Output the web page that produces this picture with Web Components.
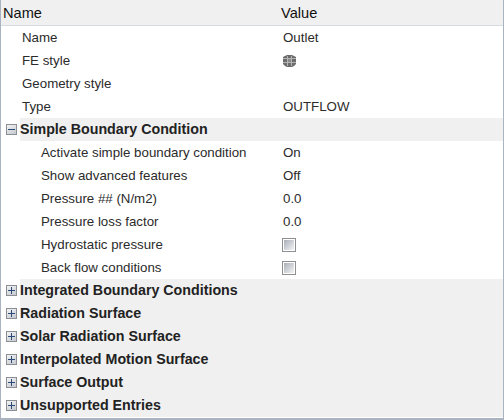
<!DOCTYPE html>
<html>
<head>
<meta charset="utf-8">
<style>
  html, body { margin: 0; padding: 0; background: #fff; }
  body { font-family: "Liberation Sans", Arial, sans-serif; font-size: 13.3px; color: #222; }
</style>
</head>
<body>
<prop-tree>
  <prop-row label="Name" value="Outlet"></prop-row>
  <prop-row label="FE style"><style-icon></style-icon></prop-row>
  <prop-row label="Geometry style"></prop-row>
  <prop-row label="Type" value="OUTFLOW"></prop-row>
  <prop-group label="Simple Boundary Condition" open>
    <prop-row depth="1" label="Activate simple boundary condition" value="On"></prop-row>
    <prop-row depth="1" label="Show advanced features" value="Off"></prop-row>
    <prop-row depth="1" label="Pressure ## (N/m2)" value="0.0"></prop-row>
    <prop-row depth="1" label="Pressure loss factor" value="0.0"></prop-row>
    <prop-row depth="1" label="Hydrostatic pressure"><check-box></check-box></prop-row>
    <prop-row depth="1" label="Back flow conditions"><check-box></check-box></prop-row>
  </prop-group>
  <prop-group label="Integrated Boundary Conditions"></prop-group>
  <prop-group label="Radiation Surface"></prop-group>
  <prop-group label="Solar Radiation Surface"></prop-group>
  <prop-group label="Interpolated Motion Surface"></prop-group>
  <prop-group label="Surface Output"></prop-group>
  <prop-group label="Unsupported Entries"></prop-group>
</prop-tree>

<script>
class PropTree extends HTMLElement {
  constructor () {
    super()
    this.attachShadow({ mode: 'open' }).innerHTML = /*html*/`
      <style>
        :host {
          display: flex;
          flex-direction: column;
          box-sizing: border-box;
          width: 504px;
          height: 420px;
          border-left: 1px solid #a9b4c0;
          border-right: 1px solid #a9b4c0;
          border-bottom: 2px solid #a9b4c0;
          overflow: hidden;
        }
        #head {
          display: flex;
          align-items: center;
          height: 25px;
          background: #f0f0f0;
          border-bottom: 1px solid #d5dadf;
          color: #111;
          font-size: 14.6px;
        }
        #head span:first-child { width: 280px; padding-left: 2px; box-sizing: border-box; }
      </style>
      <div id="head"><span>Name</span><span>Value</span></div>
      <slot></slot>
    `
  }
}

class PropRow extends HTMLElement {
  constructor () {
    super()
    this.attachShadow({ mode: 'open' }).innerHTML = /*html*/`
      <style>
        :host { display: flex; align-items: center; height: 23px; background: #fff; color: #2b2b2b; }
        #label { width: 282px; box-sizing: border-box; padding-left: 21px; }
        :host([depth="1"]) #label { padding-left: 40px; }
        #value { display: flex; align-items: center; }
      </style>
      <div id="label"></div>
      <div id="value"><span id="text"></span><slot></slot></div>
    `
  }
  connectedCallback () {
    this.shadowRoot.getElementById('label').textContent = this.getAttribute('label')
    this.shadowRoot.getElementById('text').textContent = this.getAttribute('value') || ''
  }
}

class PropGroup extends HTMLElement {
  constructor () {
    super()
    this.attachShadow({ mode: 'open' }).innerHTML = /*html*/`
      <style>
        :host { display: block; }
        #bar { display: flex; align-items: center; height: 23px; }
        #twist { width: 19px; box-sizing: border-box; padding-left: 5px; }
        #title {
          flex: 1;
          align-self: stretch;
          display: flex;
          align-items: center;
          padding-bottom: 1px;
          background: #f0f0f0;
          font-weight: bold;
          font-size: 14.25px;
          color: #222;
        }
        svg { display: block; }
      </style>
      <div id="bar">
        <div id="twist">
          <svg width="11" height="11" viewBox="0 0 11 11">
            <defs>
              <linearGradient id="g" x1="0" y1="0" x2="0.6" y2="1">
                <stop offset="0" stop-color="#f6f6f6"/><stop offset="1" stop-color="#c9cdd3"/>
              </linearGradient>
            </defs>
            <rect x=".5" y=".5" width="10" height="10" fill="url(#g)" stroke="#8b8f94"/>
            <path id="mark" d="M2 5.5h7M5.5 2v7" stroke="#2c4a78" fill="none"/>
          </svg>
        </div>
        <div id="title"></div>
      </div>
      <slot></slot>
    `
  }
  connectedCallback () {
    this.shadowRoot.getElementById('title').textContent = this.getAttribute('label')
    if (this.hasAttribute('open')) {
      this.shadowRoot.getElementById('mark').setAttribute('d', 'M2 5.5h7')
    }
  }
}

class CheckBox extends HTMLElement {
  constructor () {
    super()
    this.attachShadow({ mode: 'open' }).innerHTML = /*html*/`
      <style>
        :host { display: block; width: 14px; height: 14px; margin-left: -1px; }
        svg { display: block; }
      </style>
      <svg width="14" height="14" viewBox="0 0 14 14">
        <defs>
          <linearGradient id="c" x1="0" y1="0" x2="1" y2="1">
            <stop offset="0" stop-color="#a9aeb8"/><stop offset="1" stop-color="#f4f5f6"/>
          </linearGradient>
        </defs>
        <rect x=".5" y=".5" width="13" height="13" fill="#fff" stroke="#8e8f8f"/>
        <rect x="2" y="2" width="10" height="10" fill="url(#c)"/>
      </svg>
    `
  }
}

class StyleIcon extends HTMLElement {
  constructor () {
    super()
    this.attachShadow({ mode: 'open' }).innerHTML = /*html*/`
      <style>
        :host { display: block; width: 13px; height: 12px; }
        svg { display: block; }
      </style>
      <svg width="13" height="12" viewBox="0 0 13 12">
        <path d="M2 1l2-1h5l2 1 2 1v7l-2 2-2 1H4l-2-1-2-2V2z" fill="#6c6c6c"/>
        <path d="M0 3.500h13M0 7.500h13M4.500 1v10M8.500 1v10" stroke="#b4b4b4" fill="none"/>
        <path d="M5 4h3v3H5z" fill="#8a8a8a"/>
      </svg>
    `
  }
}

customElements.define('prop-tree', PropTree)
customElements.define('prop-row', PropRow)
customElements.define('prop-group', PropGroup)
customElements.define('check-box', CheckBox)
customElements.define('style-icon', StyleIcon)
</script>
</body>
</html>
